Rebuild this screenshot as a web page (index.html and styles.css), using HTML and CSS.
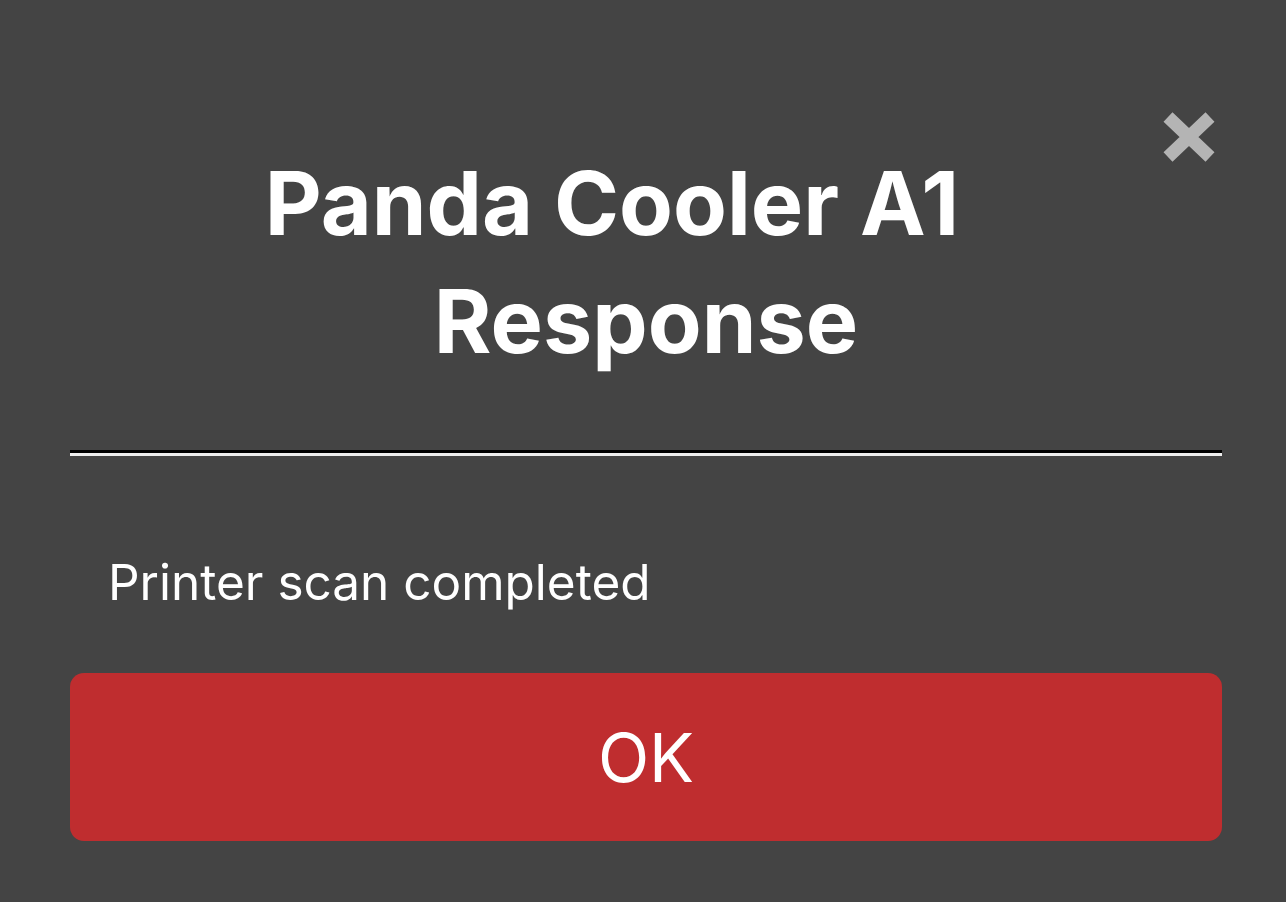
FILE: index.html
```html
<!DOCTYPE html>
<html>
<head>
<meta charset="utf-8">
<link rel="stylesheet" href="styles.css">
</head>
<body>
<div class="dialog">
  <button class="close" aria-label="Close">
    <svg width="54" height="52" viewBox="0 0 54 52"><path d="M6 6 L48 46 M48 6 L6 46" stroke="#b4b4b4" stroke-width="13" stroke-linecap="butt"/></svg>
  </button>
  <h1 class="title"><span class="title-line1">Panda Cooler A1</span><br>Response</h1>
  <div class="divider"></div>
  <p class="message">Printer scan completed</p>
  <button class="ok">OK</button>
</div>
</body>
</html>
```
FILE: styles.css
```css
html, body {
  margin: 0;
  padding: 0;
  background: #444444;
  width: 1286px;
  height: 902px;
  overflow: hidden;
}
.dialog {
  position: relative;
  padding: 0 64px 0 70px;
  font-family: Inter, "Noto Sans", sans-serif;
  color: #fff;
}
.close {
  position: absolute;
  top: 111px;
  left: 1162px;
  background: none;
  border: none;
  padding: 0;
  width: 54px;
  height: 52px;
}
.close svg { display: block; }
.title {
  margin: 0;
  padding-top: 144px;
  font-size: 88px;
  line-height: 118px;
  font-weight: 700;
  text-align: center;
}
.title-line1 {
  display: inline-block;
  padding-right: 68px;
}
.divider {
  margin-top: 70px;
  height: 3px;
  background: #000;
  border-bottom: 3px solid #eeeeee;
}
.message {
  margin: 96px 0 0 38px;
  font-size: 49.5px;
  line-height: 60px;
  font-weight: 400;
}
.ok {
  display: block;
  width: 100%;
  margin-top: 61px;
  height: 168px;
  border: none;
  border-radius: 14px;
  background: #bf2d2f;
  color: #fff;
  font-family: Inter, "Noto Sans", sans-serif;
  font-size: 67px;
  font-weight: 400;
  padding: 0;
}
```
